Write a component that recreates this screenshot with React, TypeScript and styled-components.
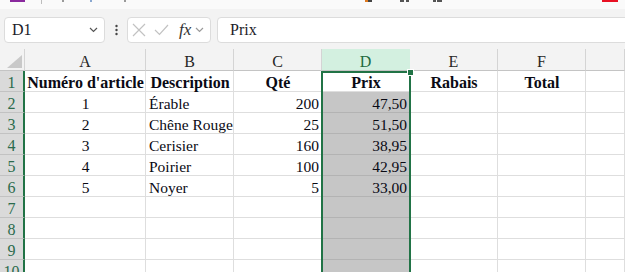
import React from 'react';
import styled, {createGlobalStyle} from 'styled-components';

const Global = createGlobalStyle`
  html, body {
    margin: 0;
    padding: 0;
    background: #f3f3f3;
  }
`

const serif = `"Liberation Serif", "Times New Roman", "DejaVu Serif", serif`

const Page = styled.div`
  width: 625px;
  height: 272px;
  overflow: hidden;
  background: #f3f3f3;
  font-family: ${serif};
`

const Ribbon = styled.div`
  height: 9px;
  background: #fafafa;
  line-height: 0;
`

const FormulaBar = styled.div`
  height: 40px;
  box-sizing: border-box;
  padding: 8px 0 0 4px;
  display: flex;
  align-items: flex-start;
`

const Box = styled.div`
  height: 26px;
  box-sizing: border-box;
  background: #fff;
  border: 1px solid #dcdcdc;
  border-radius: 4px;
  display: flex;
  align-items: center;
`

const NameBox = styled(Box)`
  width: 101px;
  padding: 0 6px 0 7px;
  justify-content: space-between;
  font-family: ${serif};
  font-size: 16px;
  color: #1c1c28;
`

const Dots = styled.div`
  width: 22px;
  display: flex;
  justify-content: center;
`

const ActionBox = styled(Box)`
  width: 84px;
  padding-left: 4px;
  gap: 8px;
`

const Fx = styled.span`
  font-family: ${serif};
  font-style: italic;
  font-size: 17px;
  color: #333;
  margin-left: 2px;
  margin-right: -4px;
`

const FormulaInput = styled(Box)`
  flex: 1;
  margin-left: 6px;
  margin-right: -10px;
  padding-left: 12px;
  font-family: ${serif};
  font-size: 16px;
  color: #1c1c28;
`

const Sheet = styled.div`
  position: relative;
  display: grid;
  grid-template-columns: 25px 121px 88px 88px 88px 88px 88px 1fr;
  grid-template-rows: 22px;
  grid-auto-rows: 21px;
`

const Corner = styled.div`
  box-sizing: border-box;
  border-bottom: 1px solid #c4c4c4;
  border-right: 1px solid #d4d4d4;
  display: flex;
  align-items: flex-end;
  justify-content: flex-end;
  padding: 0 2px 2px 0;
`

const ColHead = styled.div<{$active?: boolean}>`
  box-sizing: border-box;
  background: ${p => p.$active ? '#d3f0e0' : '#f3f3f3'};
  color: ${p => p.$active ? '#1e6b41' : '#262626'};
  border-bottom: 1px solid #c4c4c4;
  border-right: 1px solid ${p => p.$active ? '#d3f0e0' : '#d4d4d4'};
  font-family: ${serif};
  font-size: 16px;
  display: flex;
  align-items: center;
  justify-content: center;
  padding-top: 4px;
`

const RowHead = styled.div`
  box-sizing: border-box;
  background: #dadada;
  color: #2a6b4c;
  border-bottom: 1px solid #c2c2c2;
  border-right: 2px solid #217346;
  font-family: ${serif};
  font-size: 16px;
  display: flex;
  align-items: center;
  justify-content: center;
  padding-top: 4px;
`

const Cell = styled.div<{$align: string; $bold?: boolean; $shade?: boolean}>`
  box-sizing: border-box;
  background: ${p => p.$shade ? '#c6c6c6' : '#fff'};
  border-bottom: 1px solid ${p => p.$shade ? '#b3b3b3' : '#dedede'};
  border-right: 1px solid #dedede;
  font-family: ${serif};
  font-size: ${p => p.$bold ? '16px' : '15.5px'};
  font-weight: ${p => p.$bold ? 700 : 400};
  color: #0a0a14;
  display: flex;
  align-items: center;
  justify-content: ${p => p.$align};
  padding: 4px 2px 0 3px;
  white-space: nowrap;
`

const Selection = styled.div`
  position: absolute;
  left: 321px;
  top: 22px;
  width: 90px;
  height: 260px;
  box-sizing: border-box;
  border: 2px solid #217346;
  border-bottom: none;
  pointer-events: none;
`

const Handle = styled.div`
  position: absolute;
  top: -4px;
  right: -5px;
  width: 5px;
  height: 5px;
  background: #217346;
  border: 1px solid #fff;
`

const Chevron = ({color}: {color: string}) => (
  <svg width="9" height="6" viewBox="0 0 9 6">
    <path d="M1 1 L4.5 4.5 L8 1" fill="none" stroke={color} strokeWidth="1.2" />
  </svg>
)

const cols = ['A', 'B', 'C', 'D', 'E', 'F', '']
const aligns = ['center', 'flex-start', 'flex-end', 'flex-end', 'center', 'center', 'flex-start']

const header = ["Numéro d'article", 'Description', 'Qté', 'Prix', 'Rabais', 'Total', '']
const data: (string | number)[][] = [
  [1, 'Érable', 200, '47,50'],
  [2, 'Chêne Rouge', 25, '51,50'],
  [3, 'Cerisier', 160, '38,95'],
  [4, 'Poirier', 100, '42,95'],
  [5, 'Noyer', 5, '33,00'],
  [], [], [], [],
]

const App = () => {
  return (
    <Page>
      <Global />
      <Ribbon>
        <svg width="625" height="9" viewBox="0 0 625 9">
          <rect x="10" y="0" width="15" height="2" fill="#8a2a9e" />
          <rect x="41" y="0" width="1" height="4" fill="#bdbdbd" />
          <rect x="62" y="0" width="2" height="2" fill="#9a9a9a" />
          <rect x="90" y="0" width="2" height="2" fill="#8aa8d0" />
          <rect x="124" y="0" width="2" height="2" fill="#9a9a9a" />
          <rect x="365" y="0" width="3" height="2" fill="#e07a1f" />
          <rect x="368" y="0" width="4" height="2" fill="#444" />
          <rect x="400" y="0" width="4" height="2" fill="#555" />
          <rect x="406" y="0" width="3" height="2" fill="#555" />
          <rect x="433" y="0" width="3" height="2" fill="#555" />
          <rect x="437" y="0" width="5" height="2" fill="#555" />
          <rect x="602" y="0" width="16" height="2" fill="#e81123" />
        </svg>
      </Ribbon>
      <FormulaBar>
        <NameBox>
          <span>D1</span>
          <Chevron color="#555" />
        </NameBox>
        <Dots>
          <svg width="3" height="26" viewBox="0 0 3 26">
            <circle cx="1.5" cy="9" r="1.2" fill="#444" />
            <circle cx="1.5" cy="13" r="1.2" fill="#444" />
            <circle cx="1.5" cy="17" r="1.2" fill="#444" />
          </svg>
        </Dots>
        <ActionBox>
          <svg width="14" height="14" viewBox="0 0 14 14">
            <path d="M1 1 L13 13 M13 1 L1 13" stroke="#c2c2c2" strokeWidth="1.2" />
          </svg>
          <svg width="15" height="12" viewBox="0 0 15 12">
            <path d="M1 6 L5.5 10.5 L14 1" fill="none" stroke="#c2c2c2" strokeWidth="1.2" />
          </svg>
          <Fx>fx</Fx>
          <Chevron color="#9a9a9a" />
        </ActionBox>
        <FormulaInput>Prix</FormulaInput>
      </FormulaBar>
      <Sheet>
        <Corner>
          <svg width="15" height="13" viewBox="0 0 15 13">
            <path d="M15 0 L15 13 L0 13 Z" fill="#c9c9c9" />
          </svg>
        </Corner>
        {cols.map((c, i) => (
          <ColHead key={i} $active={c === 'D'}>{c}</ColHead>
        ))}
        <RowHead>1</RowHead>
        {header.map((h, i) => (
          <Cell key={i} $align="center" $bold>{h}</Cell>
        ))}
        {data.map((row, r) => (
          <React.Fragment key={r}>
            <RowHead>{r + 2}</RowHead>
            {cols.map((_, i) => (
              <Cell key={i} $align={aligns[i]} $shade={i === 3}>{row[i] ?? ''}</Cell>
            ))}
          </React.Fragment>
        ))}
        <Selection>
          <Handle />
        </Selection>
      </Sheet>
    </Page>
  );
};

export default App;
